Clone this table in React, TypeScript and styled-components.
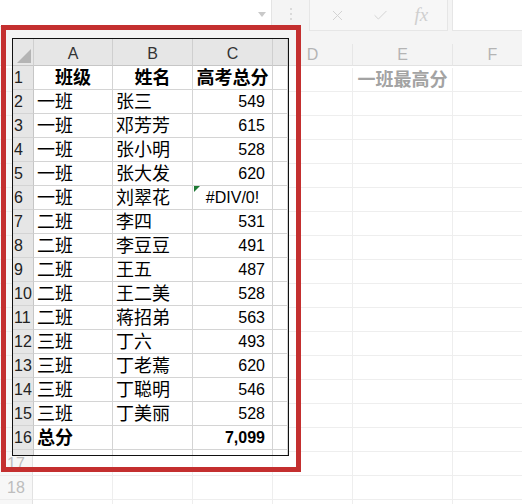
import React from "react";
import styled, { createGlobalStyle } from "styled-components";
import { X, Check } from "lucide-react";

const GlobalStyle = createGlobalStyle`
  html, body { margin: 0; padding: 0; background: #ffffff; }
  body { font-family: "Liberation Sans", "Noto Sans CJK SC", sans-serif; }
  * { box-sizing: border-box; }
`;

const CJK = `"Liberation Sans", "Noto Sans CJK SC", sans-serif`;

const Page = styled.div`
  position: relative;
  width: 522px;
  height: 504px;
  overflow: hidden;
  background: #ffffff;
`;

/* ---------- formula bar ---------- */
const FormulaBar = styled.div`
  display: flex;
  align-items: flex-start;
  height: 31px;
  background: #f4f4f4;
`;

const NameBox = styled.div`
  width: 272px;
  height: 27px;
  background: #ffffff;
  border-right: 1px solid #e4e4e4;
  border-bottom: 1px solid #e4e4e4;
  display: flex;
  align-items: center;
  justify-content: flex-end;
  padding-right: 5px;
`;

const DropArrow = styled.div`
  width: 0;
  height: 0;
  border-left: 4px solid transparent;
  border-right: 4px solid transparent;
  border-top: 5px solid #c9c9c9;
  margin-top: 2px;
`;

const Grip = styled.div`
  width: 37px;
  height: 27px;
  display: flex;
  flex-direction: column;
  align-items: center;
  justify-content: center;
  gap: 3px;
  span {
    width: 2px;
    height: 2px;
    background: #d2d2d2;
    border-radius: 1px;
  }
`;

const FxGroup = styled.div`
  width: 139px;
  height: 31px;
  border: 1px solid #e6e6e6;
  border-top: none;
  background: #f7f7f7;
  display: flex;
  align-items: center;
  justify-content: space-around;
  padding: 0 6px;
  color: #d0d0d0;
`;

const FxText = styled.span`
  font-family: "Liberation Serif", serif;
  font-style: italic;
  font-size: 19px;
  color: #cfcfcf;
`;

const FormulaInput = styled.div`
  flex: 1;
  height: 31px;
  margin-left: 4px;
  background: #ffffff;
  border-left: 1px solid #e6e6e6;
  border-bottom: 1px solid #e6e6e6;
`;

const Strip = styled.div`
  height: 13px;
  background: #f4f4f4;
`;

/* ---------- background sheet ---------- */
const Sheet = styled.div`
  display: grid;
  grid-template-columns: 33px 80px 80px 80px 80px 100px 80px;
  grid-auto-rows: 24px;
`;

const ColHead = styled.div`
  height: 22px;
  background: #f4f4f4;
  border-right: 1px solid #e6e6e6;
  border-bottom: 1px solid #e2e2e2;
  display: flex;
  align-items: center;
  justify-content: center;
  font-family: "Liberation Sans", sans-serif;
  font-size: 16px;
  color: #b4b4b4;
`;

const RowHead = styled.div`
  background: #f7f7f7;
  border-right: 1px solid #e2e2e2;
  border-bottom: 1px solid #ececec;
  display: flex;
  align-items: center;
  justify-content: center;
  font-family: "Liberation Sans", sans-serif;
  font-size: 16px;
  color: #bdbdbd;
`;

const BgCell = styled.div`
  border-right: 1px solid #eeeeee;
  border-bottom: 1px solid #eeeeee;
  display: flex;
  align-items: center;
  justify-content: center;
  font-family: ${CJK};
  font-size: 18px;
  font-weight: 700;
  color: #a3a3a3;
  white-space: nowrap;
  line-height: 1;
`;

/* ---------- pasted snapshot ---------- */
const Snapshot = styled.div`
  position: absolute;
  left: 12px;
  top: 38px;
  width: 277px;
  height: 418px;
  border: 1px solid #111111;
  background: #ffffff;
  overflow: hidden;
  display: grid;
  grid-template-columns: 21px 79px 80px 80px 1fr;
  grid-template-rows: 27px;
  grid-auto-rows: 24px;
`;

const SnapCorner = styled.div`
  position: relative;
  background: #e6e6e6;
  border-right: 1px solid #cfcfcf;
  border-bottom: 1px solid #c6c6c6;
  svg { position: absolute; right: 2px; bottom: 2px; }
`;

const SnapColHead = styled.div`
  background: #e6e6e6;
  border-right: 1px solid #cfcfcf;
  border-bottom: 1px solid #c6c6c6;
  display: flex;
  align-items: center;
  justify-content: center;
  padding-top: 4px;
  font-family: "Liberation Sans", sans-serif;
  font-size: 16px;
  color: #333333;
`;

const SnapRowHead = styled.div`
  background: #e6e6e6;
  border-right: 1px solid #c6c6c6;
  border-bottom: 1px solid #d4d4d4;
  display: flex;
  align-items: center;
  padding-left: 1px;
  font-family: "Liberation Sans", sans-serif;
  font-size: 16px;
  color: #222222;
`;

const Cell = styled.div<{ $align?: "left" | "right" | "center"; $bold?: boolean; $num?: boolean }>`
  position: relative;
  border-right: 1px solid #d4d4d4;
  border-bottom: 1px solid #d4d4d4;
  display: flex;
  align-items: center;
  justify-content: ${(p) =>
    p.$align === "right" ? "flex-end" : p.$align === "center" ? "center" : "flex-start"};
  padding: ${(p) => (p.$align === "right" ? "0 7px 0 0" : p.$align === "center" ? "0" : "0 0 0 3px")};
  font-family: ${CJK};
  font-size: ${(p) => (p.$num ? "16px" : "18px")};
  font-weight: ${(p) => (p.$bold ? 700 : 400)};
  color: #000000;
  white-space: nowrap;
  line-height: 1;
`;

const ErrorFlag = styled.div`
  position: absolute;
  left: 1px;
  top: 0;
  width: 0;
  height: 0;
  border-top: 6px solid #1f7a35;
  border-right: 6px solid transparent;
`;

const RedFrame = styled.div`
  position: absolute;
  left: 1px;
  top: 25px;
  width: 300px;
  height: 447px;
  border: 5px solid #c42f2f;
  pointer-events: none;
`;

type Val = string | number;
const data: [string, string, Val][] = [
  ["一班", "张三", 549],
  ["一班", "邓芳芳", 615],
  ["一班", "张小明", 528],
  ["一班", "张大发", 620],
  ["一班", "刘翠花", "#DIV/0!"],
  ["二班", "李四", 531],
  ["二班", "李豆豆", 491],
  ["二班", "王五", 487],
  ["二班", "王二美", 528],
  ["二班", "蒋招弟", 563],
  ["三班", "丁六", 493],
  ["三班", "丁老蔫", 620],
  ["三班", "丁聪明", 546],
  ["三班", "丁美丽", 528],
];

const bgCols = ["", "A", "B", "C", "D", "E", "F"];

export default function App() {
  const bgRows = Array.from({ length: 19 }, (_, i) => i + 1);
  return (
    <Page>
      <GlobalStyle />
      <FormulaBar>
        <NameBox>
          <DropArrow />
        </NameBox>
        <Grip>
          <span />
          <span />
          <span />
        </Grip>
        <FxGroup>
          <X size={17} strokeWidth={1.3} />
          <Check size={17} strokeWidth={1.3} />
          <FxText>fx</FxText>
        </FxGroup>
        <FormulaInput />
      </FormulaBar>
      <Strip />
      <Sheet>
        {bgCols.map((c, i) => (
          <ColHead key={"h" + i}>{i >= 4 ? c : ""}</ColHead>
        ))}
        {bgRows.map((r) => (
          <React.Fragment key={r}>
            <RowHead>{r === 17 || r === 18 ? r : ""}</RowHead>
            {[1, 2, 3, 4, 5, 6].map((c) => (
              <BgCell key={c}>{r === 1 && c === 5 ? "一班最高分" : ""}</BgCell>
            ))}
          </React.Fragment>
        ))}
      </Sheet>

      <Snapshot>
        <SnapCorner>
          <svg width="14" height="14" viewBox="0 0 14 14">
            <polygon points="14,0 14,14 0,14" fill="#b4b4b4" />
          </svg>
        </SnapCorner>
        <SnapColHead>A</SnapColHead>
        <SnapColHead>B</SnapColHead>
        <SnapColHead>C</SnapColHead>
        <SnapColHead />

        <SnapRowHead>1</SnapRowHead>
        <Cell $align="center" $bold>班级</Cell>
        <Cell $align="center" $bold>姓名</Cell>
        <Cell $align="center" $bold>高考总分</Cell>
        <Cell />

        {data.map(([cls, name, score], i) => (
          <React.Fragment key={i}>
            <SnapRowHead>{i + 2}</SnapRowHead>
            <Cell>{cls}</Cell>
            <Cell>{name}</Cell>
            {typeof score === "number" ? (
              <Cell $align="right" $num>{score}</Cell>
            ) : (
              <Cell $align="center" $num>
                <ErrorFlag />
                {score}
              </Cell>
            )}
            <Cell />
          </React.Fragment>
        ))}

        <SnapRowHead>16</SnapRowHead>
        <Cell $bold>总分</Cell>
        <Cell />
        <Cell $align="right" $num $bold>7,099</Cell>
        <Cell />

        <SnapRowHead />
        <Cell />
        <Cell />
        <Cell />
        <Cell />
      </Snapshot>

      <RedFrame />
    </Page>
  );
}
